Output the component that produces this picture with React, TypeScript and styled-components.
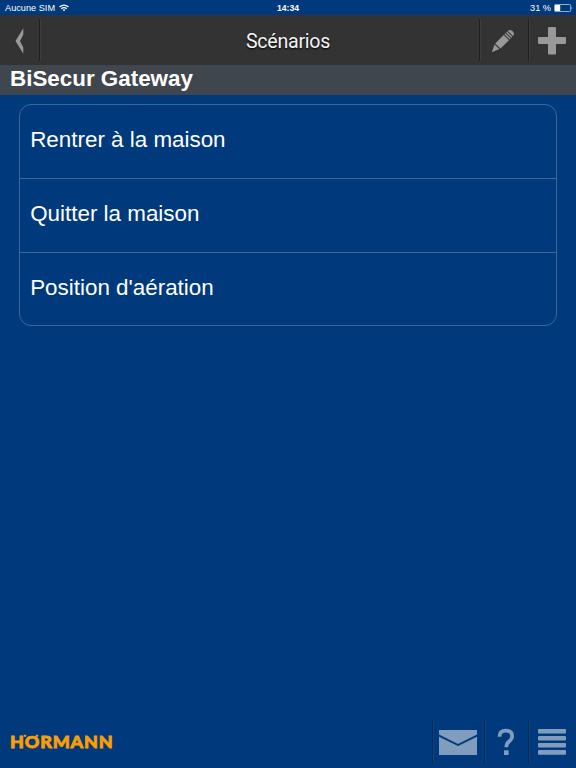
import React from "react";
import styled, { createGlobalStyle } from "styled-components";

const GlobalStyle = createGlobalStyle`
  * { box-sizing: border-box; }
  body { margin: 0; background: #003a7c; }
`;

const Screen = styled.div`
  width: 576px;
  height: 768px;
  display: flex;
  flex-direction: column;
  overflow: hidden;
  background: #003a7c;
  color: #fff;
  font-family: "Liberation Sans", Arial, sans-serif;
`;

const StatusBar = styled.div`
  height: 15px;
  flex: none;
  display: grid;
  grid-template-columns: 1fr auto 1fr;
  align-items: center;
  padding: 1px 3px 0 5px;
  font-size: 9.2px;
  line-height: 14px;
`;

const StatusGroup = styled.div<{ $end?: boolean }>`
  display: flex;
  align-items: center;
  justify-content: ${(p) => (p.$end ? "flex-end" : "flex-start")};
  gap: ${(p) => (p.$end ? 3 : 4)}px;
`;

const Clock = styled.div`
  font-weight: 700;
  font-size: 8.6px;
  padding-right: 2px;
`;

const Header = styled.header`
  height: 50px;
  flex: none;
  display: grid;
  grid-template-columns: 41px 1fr 49px 48px;
  background: #333;
`;

const HeaderButton = styled.button<{ $side: "left" | "right" }>`
  display: flex;
  align-items: center;
  justify-content: center;
  height: 42px;
  margin: 4px 0 0;
  padding: ${(p) => (p.$side === "left" ? "2px 1px 0 0" : "2px 2px 0 0")};
  border: 0;
  background: none;
  ${(p) =>
    p.$side === "left"
      ? "border-right: 1px solid #3d3d3d; box-shadow: inset -1px 0 #202020;"
      : "border-left: 1px solid #202020; box-shadow: inset 1px 0 #3d3d3d;"}
`;

const Title = styled.h1`
  margin: 0;
  padding: 1px 0 0 205px;
  font: 400 19.6px/51px Roboto, sans-serif;
  letter-spacing: -0.27px;
  color: #f4f4f4;
  text-shadow: 0 1px 2px #000;
`;

const Gateway = styled.h2`
  height: 30px;
  flex: none;
  margin: 0;
  padding-left: 10px;
  background: #3f464d;
  font-size: 22.4px;
  font-weight: 700;
  line-height: 27px;
`;

const Content = styled.main`
  flex: 1;
  padding: 9px 19px 0;
`;

const ScenarioList = styled.ul`
  margin: 0;
  padding: 0;
  height: 222px;
  display: grid;
  grid-template-rows: 73px 74px 73px;
  list-style: none;
  border: 1px solid #3c6697;
  border-radius: 12px;
`;

const Scenario = styled.li`
  padding: 0 10.2px;
  font-size: 22.4px;
  line-height: 70px;
  & + & {
    border-top: 1px solid #3c6697;
  }
`;

const Footer = styled.footer`
  height: 50px;
  flex: none;
  display: grid;
  grid-template-columns: 1fr 52px 44px 48px;
`;

const FooterButton = styled.button`
  display: flex;
  align-items: center;
  justify-content: center;
  height: 42px;
  margin: 3px 0 0;
  padding: 0 2px 0 0;
  border: 0;
  border-left: 1px solid #07284f;
  box-shadow: inset 1px 0 #0a437f;
  background: none;
`;

const Logo = styled.svg`
  margin: 13px 0 0 9px;
  fill: #fb9e06;
  stroke: #fb9e06;
  stroke-width: 0.8;
  font: 900 17.5px Lato, sans-serif;
  letter-spacing: 0.8px;
`;

const scenarios = ["Rentrer à la maison", "Quitter la maison", "Position d'aération"];

const WifiIcon = () => (
  <svg width="10" height="8" viewBox="0 0 10 8" fill="none" stroke="#fff" strokeWidth="1.3">
    <path d="M.6 3.1Q5-.9 9.4 3.1M2.3 4.8Q5 2.4 7.7 4.8" />
    <path d="M3.6 5.8Q5 4.7 6.4 5.8L5 7.3Z" fill="#fff" stroke="none" />
  </svg>
);

const BatteryIcon = () => (
  <svg width="19" height="8" viewBox="0 0 19 8">
    <rect x=".5" y=".5" width="16.2" height="7" rx="1" fill="none" stroke="#b9cbe0" strokeWidth=".8" />
    <rect x="1" y="1" width="5.2" height="6" fill="#fff" />
    <path d="M17.6 2.5Q18.8 4 17.6 5.5Z" fill="#fff" />
  </svg>
);

const BackIcon = () => (
  <svg width="10" height="26" viewBox="0 0 10 26">
    <path d="M8.3 .3V6.5L5 13L8.3 19.5V25.7L.5 13Z" fill="#999" />
  </svg>
);

const PencilIcon = () => (
  <svg width="24" height="24" viewBox="0 0 24 24">
    <g fill="#999">
      <path d="M.8 23.2L3.6 15.6L8.4 20.1Z" />
      <path d="M4.2 14.4L12.7 6L18 11.2L9.5 19.6Z" />
      <path d="M13.4 5.3L14.4 4.3L19.7 9.5L18.7 10.5Z" />
      <path d="M15.1 3.6L16.1 2.6L21.4 7.8L20.4 8.8Z" />
      <path d="M16.8 1.9Q18.2 .8 19.8 1.2Q22.2 1.9 22.9 4.3Q23.1 5.8 22.1 7.1Z" />
    </g>
  </svg>
);

const PlusIcon = () => (
  <svg width="30" height="30" viewBox="0 0 30 30">
    <path
      d="M12 1H18Q19 1 19 2V11H28Q29 11 29 12V17Q29 18 28 18H19V27.5Q19 28.5 18 28.5H12Q11 28.5 11 27.5V18H2Q1 18 1 17V12Q1 11 2 11H11V2Q11 1 12 1Z"
      fill="#999"
    />
  </svg>
);

const MailIcon = () => (
  <svg width="38" height="25" viewBox="0 0 38 25" fill="#809dbe">
    <path d="M0 0H38V4.6L19 14L0 4.6Z" />
    <path d="M0 6.7L19 16.1L38 6.7V25H0Z" />
  </svg>
);

const HelpIcon = () => (
  <svg width="18" height="28" viewBox="0 0 18 28">
    <path
      d="M2.5 8.8Q2.5 2.7 9 2.7Q15.2 2.7 15.2 8Q15.2 10.8 12.3 13.2Q9.3 15.5 9.3 19.2"
      fill="none"
      stroke="#809dbe"
      strokeWidth="3.7"
    />
    <rect x="7" y="22.3" width="4.6" height="4.7" fill="#809dbe" />
  </svg>
);

const MenuIcon = () => (
  <svg width="28" height="26" viewBox="0 0 28 26" fill="#809dbe">
    <rect width="28" height="4.5" rx="1" />
    <rect y="7" width="28" height="4.5" rx="1" />
    <rect y="14" width="28" height="4.5" rx="1" />
    <rect y="21" width="28" height="4.7" rx="1" />
  </svg>
);

// The brand's umlaut sits on the shoulders of the O, so the font's own dots are covered.
const BrandLogo = () => (
  <Logo width="106" height="22" viewBox="0 0 106 22">
    <text x="1" y="17.4" textLength="103.5" lengthAdjust="spacingAndGlyphs">
      HÖRMANN
    </text>
    <rect x="14" y="0" width="17" height="4.6" fill="#003a7c" stroke="none" />
    <rect x="15" y="4" width="2" height="1.6" strokeWidth=".4" />
    <rect x="27" y="4" width="2" height="1.6" strokeWidth=".4" />
  </Logo>
);

export default function App() {
  return (
    <Screen>
      <GlobalStyle />
      <StatusBar>
        <StatusGroup>
          <span>Aucune SIM</span>
          <WifiIcon />
        </StatusGroup>
        <Clock>14:34</Clock>
        <StatusGroup $end>
          <span>31 %</span>
          <BatteryIcon />
        </StatusGroup>
      </StatusBar>
      <Header>
        <HeaderButton $side="left" aria-label="Retour">
          <BackIcon />
        </HeaderButton>
        <Title>Scénarios</Title>
        <HeaderButton $side="right" aria-label="Modifier">
          <PencilIcon />
        </HeaderButton>
        <HeaderButton $side="right" aria-label="Ajouter">
          <PlusIcon />
        </HeaderButton>
      </Header>
      <Gateway>BiSecur Gateway</Gateway>
      <Content>
        <ScenarioList>
          {scenarios.map((name) => (
            <Scenario key={name}>{name}</Scenario>
          ))}
        </ScenarioList>
      </Content>
      <Footer>
        <BrandLogo />
        <FooterButton aria-label="Messages">
          <MailIcon />
        </FooterButton>
        <FooterButton aria-label="Aide">
          <HelpIcon />
        </FooterButton>
        <FooterButton aria-label="Menu">
          <MenuIcon />
        </FooterButton>
      </Footer>
    </Screen>
  );
}
